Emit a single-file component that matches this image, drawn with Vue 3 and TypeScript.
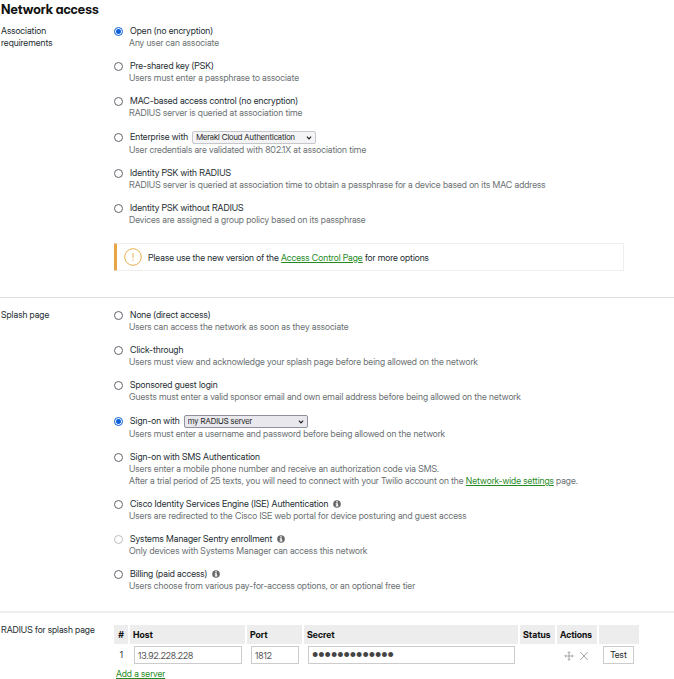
<script setup lang="ts">
import { ref } from 'vue'

interface Option {
  id: string
  label: string
  notes: string[]
  link?: { text: string; after: string }
  choices?: string[]
  info?: boolean
  disabled?: boolean
}

interface Group {
  name: string
  title: string
  options: Option[]
}

const groups: Group[] = [
  {
    name: 'association',
    title: 'Association requirements',
    options: [
      { id: 'open', label: 'Open (no encryption)', notes: ['Any user can associate'] },
      { id: 'psk', label: 'Pre-shared key (PSK)', notes: ['Users must enter a passphrase to associate'] },
      { id: 'mac', label: 'MAC-based access control (no encryption)', notes: ['RADIUS server is queried at association time'] },
      {
        id: 'enterprise',
        label: 'Enterprise with',
        choices: ['Meraki Cloud Authentication'],
        notes: ['User credentials are validated with 802.1X at association time'],
      },
      {
        id: 'ipsk-radius',
        label: 'Identity PSK with RADIUS',
        notes: ['RADIUS server is queried at association time to obtain a passphrase for a device based on its MAC address'],
      },
      { id: 'ipsk', label: 'Identity PSK without RADIUS', notes: ['Devices are assigned a group policy based on its passphrase'] },
    ],
  },
  {
    name: 'splash',
    title: 'Splash page',
    options: [
      { id: 'none', label: 'None (direct access)', notes: ['Users can access the network as soon as they associate'] },
      {
        id: 'click',
        label: 'Click-through',
        notes: ['Users must view and acknowledge your splash page before being allowed on the network'],
      },
      {
        id: 'sponsored',
        label: 'Sponsored guest login',
        notes: ['Guests must enter a valid sponsor email and own email address before being allowed on the network'],
      },
      {
        id: 'signon',
        label: 'Sign-on with',
        choices: ['my RADIUS server'],
        notes: ['Users must enter a username and password before being allowed on the network'],
      },
      {
        id: 'sms',
        label: 'Sign-on with SMS Authentication',
        notes: [
          'Users enter a mobile phone number and receive an authorization code via SMS.',
          'After a trial period of 25 texts, you will need to connect with your Twilio account on the',
        ],
        link: { text: 'Network-wide settings', after: 'page.' },
      },
      {
        id: 'ise',
        label: 'Cisco Identity Services Engine (ISE) Authentication',
        info: true,
        notes: ['Users are redirected to the Cisco ISE web portal for device posturing and guest access'],
      },
      {
        id: 'sentry',
        label: 'Systems Manager Sentry enrollment',
        info: true,
        disabled: true,
        notes: ['Only devices with Systems Manager can access this network'],
      },
      {
        id: 'billing',
        label: 'Billing (paid access)',
        info: true,
        notes: ['Users choose from various pay-for-access options, or an optional free tier'],
      },
    ],
  },
]

const selected = ref<Record<string, string>>({ association: 'open', splash: 'signon' })
const host = ref('13.92.228.228')
const port = ref('1812')
const secret = ref('•••••••••••••')
</script>

<template>
  <main class="page">
    <h1>Network access</h1>

    <section v-for="g in groups" :key="g.name" class="row" :class="g.name">
      <h2 :id="g.name + '-title'" class="title">{{ g.title }}</h2>
      <div class="content">
        <div class="options" role="radiogroup" :aria-labelledby="g.name + '-title'">
          <div v-for="o in g.options" :key="o.id" class="option">
            <div class="head" :class="{ tall: o.choices }">
              <input
                :id="o.id"
                v-model="selected[g.name]"
                type="radio"
                :name="g.name"
                :value="o.id"
                :disabled="o.disabled"
              />
              <label :for="o.id">{{ o.label }}</label>
              <span v-if="o.choices" class="select">
                <select :class="{ active: selected[g.name] === o.id }" :aria-label="o.label">
                  <option v-for="c in o.choices" :key="c">{{ c }}</option>
                </select>
                <svg viewBox="0 0 6 4" aria-hidden="true"><path d="M0.9 0.7 3 2.8 5.1 0.7" /></svg>
              </span>
              <svg v-if="o.info" class="info" viewBox="0 0 16 16" aria-hidden="true">
                <circle cx="8" cy="8" r="7.6" />
                <path d="M6.5 2.6h3.2v2.5H6.5zM5.4 6.4h4.3v4.8h1.2v1.9H5.3v-1.9h1.4V8.3H5.4z" />
              </svg>
            </div>
            <p v-for="(n, i) in o.notes" :key="n">
              {{ n }}
              <template v-if="o.link && i === o.notes.length - 1">
                <a href="#">{{ o.link.text }}</a> {{ o.link.after }}
              </template>
            </p>
          </div>
        </div>
        <div v-if="g.name === 'association'" class="alert">
          <svg viewBox="0 0 18 18" aria-hidden="true">
            <circle cx="9" cy="9" r="8.3" />
            <path d="M9 5v5M9 11.4v1.4" />
          </svg>
          <span>Please use the new version of the <a href="#">Access Control Page</a> for more options</span>
        </div>
      </div>
    </section>

    <section class="row radius">
      <h2 class="title">RADIUS for splash page</h2>
      <div class="content">
        <table>
          <thead>
            <tr>
              <th class="num">#</th>
              <th class="host">Host</th>
              <th class="port">Port</th>
              <th>Secret</th>
              <th class="status">Status</th>
              <th class="actions">Actions</th>
              <th class="test"></th>
            </tr>
          </thead>
          <tbody>
            <tr>
              <td class="num">1</td>
              <td><input v-model="host" type="text" aria-label="Host" /></td>
              <td><input v-model="port" type="text" aria-label="Port" /></td>
              <td><input v-model="secret" class="secret" type="password" aria-label="Secret" /></td>
              <td></td>
              <td>
                <div class="tools">
                  <button type="button" class="icon" aria-label="Move">
                    <svg viewBox="0 0 10 10" aria-hidden="true">
                      <path d="M5 1v8M1 5h8M3.7 2 5 .7 6.3 2M3.7 8 5 9.3 6.3 8M2 3.7.7 5 2 6.3M8 3.7 9.3 5 8 6.3" />
                    </svg>
                  </button>
                  <button type="button" class="icon" aria-label="Delete">
                    <svg viewBox="0 0 10 10" aria-hidden="true"><path d="M1.4 1 8.6 9M8.6 1 1.4 9" /></svg>
                  </button>
                </div>
              </td>
              <td><button type="button" class="run">Test</button></td>
            </tr>
          </tbody>
        </table>
        <a class="add" href="#">Add a server</a>
      </div>
    </section>
  </main>
</template>

<style>
body {
  background: #fff;
}
</style>

<style scoped>
.page,
.page * {
  box-sizing: border-box;
}
.page {
  font: 9px/12px 'Inter Display', Inter, 'Liberation Sans', sans-serif;
  color: #222b30;
}
h1,
h2,
p {
  margin: 0;
  font: inherit;
}
h1 {
  padding: 1px 1px 0;
  font-size: 13px;
  line-height: 16px;
  font-weight: 700;
  font-feature-settings: 'cv11';
  color: #111;
}
a {
  color: #258a25;
  text-decoration: underline;
}
.row {
  display: grid;
  grid-template-columns: 113px 1fr;
  padding-left: 1px;
}
.title {
  padding-right: 40px;
}
.association {
  padding-top: 8px;
  padding-bottom: 26px;
}
.splash {
  border-top: 1px solid #dedede;
  padding-top: 11px;
  padding-bottom: 19px;
}
.radius {
  border-top: 2px solid #eee;
  padding-top: 11px;
}
.radius .title {
  padding-right: 0;
}
.radius .content {
  padding-top: 1px;
}
.options {
  display: flex;
  flex-direction: column;
  gap: 11px;
}
.head {
  display: flex;
  align-items: center;
  height: 12px;
}
.head.tall {
  height: 14px;
}
.head label {
  margin-left: 7px;
}
input[type='radio'] {
  appearance: none;
  flex: none;
  width: 9px;
  height: 9px;
  margin: 0;
  border: 1px solid #62626b;
  border-radius: 50%;
  background: #fff;
}
input[type='radio']:checked {
  border: 1px solid #0a5fdb;
  background: radial-gradient(circle, #0a5fdb 2px, #fff 3px);
}
input[type='radio']:disabled {
  border-color: #bdbdc2;
}
.option p {
  padding-left: 15px;
  color: #6a6f72;
}
.select {
  position: relative;
  margin-left: 4px;
}
.select select {
  display: block;
  appearance: none;
  width: 124px;
  height: 13px;
  padding: 0 3px;
  border: 1px solid #c6c6cd;
  border-radius: 2px;
  background: #f4f4f6;
  font: inherit;
  font-size: 8px;
  line-height: 11px;
  color: #222;
}
.select select.active {
  border-color: #8f8f9d;
  background: #e9e9ed;
}
.select svg {
  position: absolute;
  right: 4px;
  top: 5px;
  width: 6px;
  height: 4px;
  fill: none;
  stroke: #222;
  stroke-width: 1.2;
  pointer-events: none;
}
.info {
  width: 8px;
  height: 8px;
  margin-left: 5px;
}
.info circle {
  fill: #666;
}
.info path {
  fill: #fff;
}
.alert {
  display: flex;
  align-items: center;
  gap: 6px;
  height: 28px;
  margin: 17px 50px 0 0;
  padding-left: 7px;
  border: 1px solid #eee;
  border-left: 3px solid #e8a548;
  border-radius: 1px;
}
.alert span {
  padding-top: 2px;
}
.alert svg {
  width: 18px;
  height: 18px;
  fill: none;
  stroke: #e8ae50;
}
table {
  width: calc(100% - 32px);
  table-layout: fixed;
  border-collapse: separate;
  border-spacing: 1px 0;
  margin-left: -1px;
}
th {
  height: 19px;
  padding: 0 3px;
  border-right: 1px solid #fff;
  background: #ededed;
  text-align: left;
  font-weight: 700;
  color: #111;
}
td {
  height: 22px;
  padding: 0 4px;
}
.num {
  width: 15px;
  padding: 0;
  text-align: center;
}
.host {
  width: 116px;
}
.port {
  width: 56px;
}
.status {
  width: 36px;
}
.actions {
  width: 41px;
}
.test {
  width: 41px;
}
td input {
  display: block;
  width: 100%;
  height: 18px;
  padding: 0 3px;
  border: 1px solid #ccc;
  border-radius: 0;
  background: #fff;
  font: inherit;
  color: #555;
}
td input.secret {
  font-family: 'Liberation Sans', sans-serif;
  font-size: 18px;
  color: #444;
}
.tools {
  display: flex;
  gap: 5px;
  padding: 1px 0 0 3px;
}
.icon {
  display: block;
  width: 10px;
  height: 10px;
  padding: 0;
  border: 0;
  background: none;
}
.icon svg {
  display: block;
  width: 10px;
  height: 10px;
  fill: none;
  stroke: #a4a4a4;
}
.run {
  display: block;
  width: 31px;
  height: 18px;
  padding: 0;
  border: 1px solid #ccc;
  background: #fff;
  font: inherit;
  color: #222;
}
.add {
  display: inline-block;
  margin: 2px 0 0 2px;
}
</style>
